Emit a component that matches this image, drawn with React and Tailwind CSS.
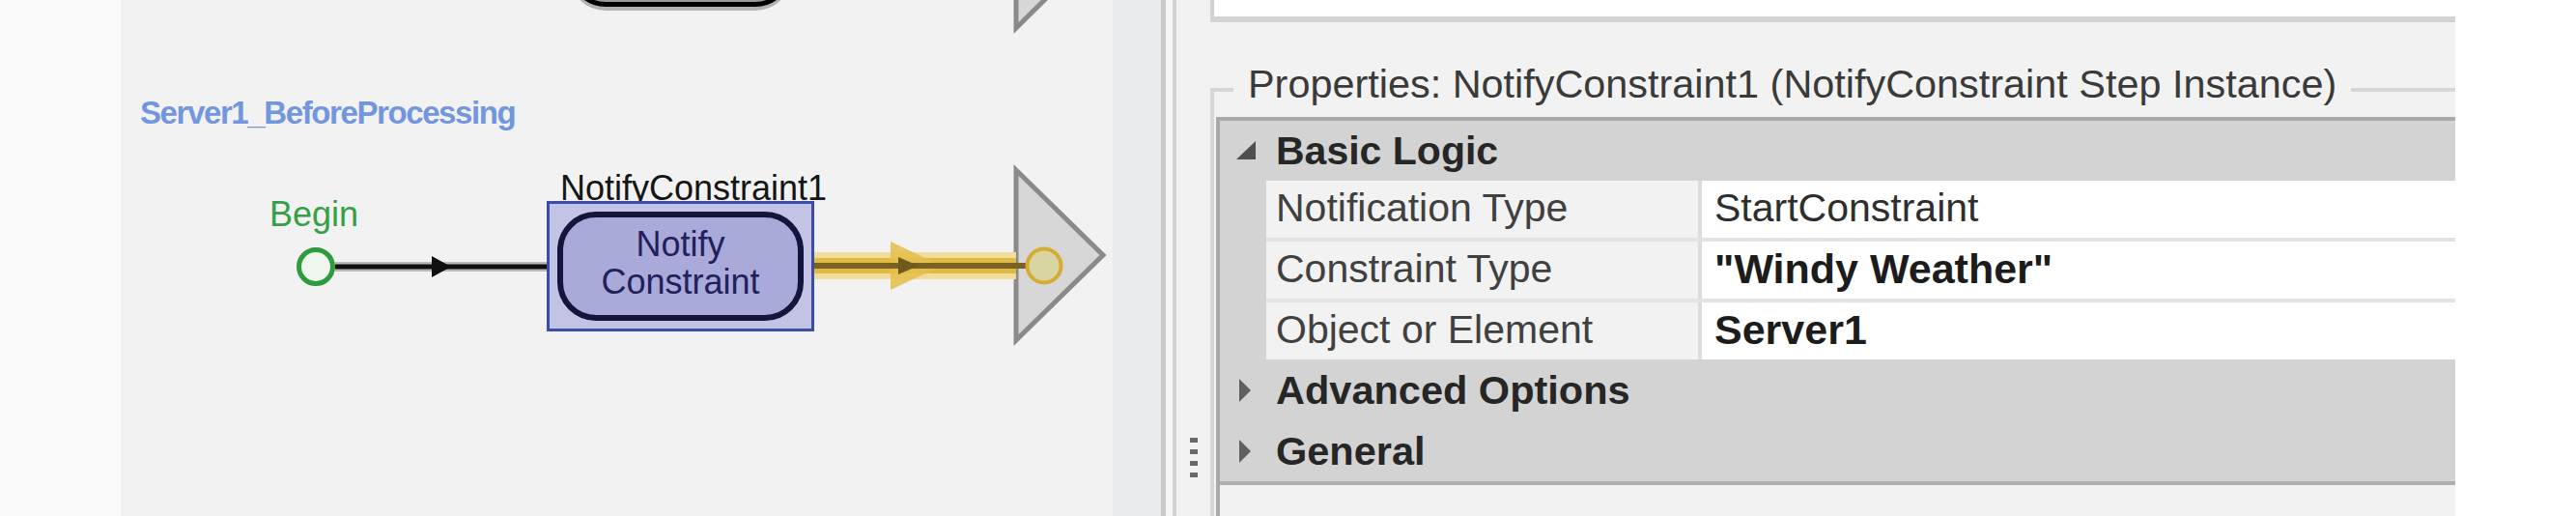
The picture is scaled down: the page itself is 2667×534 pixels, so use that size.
import React from 'react';

const ExpandedIcon = () => (
  <svg width="20" height="20" viewBox="0 0 20 20">
    <polygon points="0,19 20,0 20,19" fill="#4f4f4f" />
  </svg>
);

const CollapsedIcon = () => (
  <svg width="12" height="24" viewBox="0 0 12 24">
    <polygon points="0,0 12,12 0,24" fill="#5f5f5f" />
  </svg>
);

const Category = ({ title, open }) => (
  <div className="flex h-[63px] items-center bg-[#d3d3d3]">
    <div className={open ? 'flex w-[58px] shrink-0 items-center pl-[17px]' : 'flex w-[58px] shrink-0 items-center pl-[20px]'}>
      {open ? <ExpandedIcon /> : <CollapsedIcon />}
    </div>
    <span className="whitespace-nowrap text-[41.5px] font-bold leading-[41px] text-[#262626]">{title}</span>
  </div>
);

const PropRow = ({ name, value, bold }) => (
  <div className="flex h-[59px]">
    <div className="flex w-[447px] shrink-0 items-center bg-[#f2f2f2] pb-[3px] pl-[10px]">
      <span className="whitespace-nowrap text-[41px] leading-[41px] text-[#404040]">{name}</span>
    </div>
    <div className="w-[4px] shrink-0 bg-[#dcdcdc]" />
    <div className="flex flex-1 items-center bg-white pb-[3px] pl-[13px]">
      <span className={bold ? 'whitespace-nowrap text-[43px] font-bold leading-[41px] text-[#1c1c1c]' : 'whitespace-nowrap text-[41px] leading-[41px] text-[#2e2e2e]'}>
        {value}
      </span>
    </div>
  </div>
);

const Canvas = () => (
  <div className="relative w-[1027px] shrink-0 overflow-hidden bg-[#f2f2f2]">
    <svg className="absolute inset-0" width="1027" height="534" viewBox="0 0 1027 534">
      {/* output connectors */}
      <polygon points="927,-150 1017,-60 927,29" fill="#d7d7d7" stroke="#8a8a8a" strokeWidth="5" />
      <polygon points="927,176 1017,264 927,352" fill="#d7d7d7" stroke="#8a8a8a" strokeWidth="5" />

      {/* Begin -> step link */}
      <line x1="222" y1="276" x2="452" y2="276" stroke="#b9b9b9" strokeWidth="10" />
      <line x1="222" y1="276" x2="452" y2="276" stroke="#111111" strokeWidth="5" />
      <polygon points="322,265 342,276 322,287" fill="#111111" />

      {/* highlighted link */}
      <line x1="706" y1="275" x2="927" y2="275" stroke="#f2dc9c" strokeWidth="28" />
      <line x1="706" y1="275" x2="927" y2="275" stroke="#e0b844" strokeWidth="16" />
      <polygon points="797,250 850,275 797,300" fill="#e6c050" opacity="0.9" />
      <line x1="706" y1="275" x2="940" y2="275" stroke="#7a6220" strokeWidth="6" />
      <polygon points="805,266 826,275 805,284" fill="#6e5a1e" />
      <circle cx="956" cy="275" r="17.5" fill="#d9d5a3" stroke="#d6ac38" strokeWidth="4" />

      {/* Begin node */}
      <circle cx="202" cy="276" r="17.5" fill="#eef6ee" stroke="#2f9b3f" strokeWidth="5" />
    </svg>

    {/* step partly above the view */}
    <div className="absolute left-[464px] top-[-70px] h-[77px] w-[231px] rounded-[38px] border-[5px] border-black bg-[#9a9a9a] shadow-[0_4px_0_#b3b3b3]" />

    <div className="absolute left-[20px] top-[100px] whitespace-nowrap text-[33px] font-bold leading-[33px] tracking-[-1.4px] text-[#7397de]">
      Server1_BeforeProcessing
    </div>

    <div className="absolute left-[154px] top-[204px] text-[36px] leading-[36px] text-[#36a046]">Begin</div>

    <div className="absolute left-[455px] top-[177px] whitespace-nowrap text-[36px] leading-[36px] text-[#151515]">
      NotifyConstraint1
    </div>

    <div className="absolute left-[441px] top-[208px] h-[135px] w-[277px] border-[3px] border-[#3c4ca8] bg-[#c3c3e6] p-[8px]">
      <div className="flex h-full w-full flex-col items-center justify-center rounded-[40px] border-[6px] border-[#14143c] bg-[#a9a9da] pb-[7px] text-[36px] leading-[39px] text-[#22205a]">
        <span>Notify</span>
        <span>Constraint</span>
      </div>
    </div>
  </div>
);

const PropertiesPanel = () => (
  <div className="flex w-[1324px] shrink-0 bg-[#f2f2f2]">
    {/* splitter grip */}
    <div className="flex w-[35px] shrink-0 flex-col items-center gap-[7px] pt-[453px]">
      <div className="h-[5px] w-[8px] bg-[#6a6a6a]" />
      <div className="h-[5px] w-[8px] bg-[#6a6a6a]" />
      <div className="h-[5px] w-[8px] bg-[#6a6a6a]" />
      <div className="h-[5px] w-[8px] bg-[#6a6a6a]" />
    </div>

    <div className="flex flex-1 flex-col">
      <div className="h-[23px] shrink-0 border-b-[6px] border-l-4 border-[#d3d3d3] bg-white" />

      {/* group box header */}
      <div className="mt-[44px] flex h-[41px] shrink-0">
        <div className="h-[17px] w-[24px] shrink-0 self-end border-l-4 border-t-4 border-[#d6d6d6]" />
        <span className="whitespace-nowrap px-[15px] text-[41.4px] leading-[41px] text-[#3a3a3a]">
          Properties: NotifyConstraint1 (NotifyConstraint Step Instance)
        </span>
        <div className="h-[17px] flex-1 self-end border-t-4 border-[#d6d6d6]" />
      </div>

      <div className="flex flex-1 flex-col border-l-4 border-[#d6d6d6] pl-[2px] pt-[13px]">
        <div className="flex flex-1 flex-col border-l-4 border-t-4 border-[#a9a9a9]">
          <div className="flex h-[62px] items-center bg-[#d3d3d3]">
            <div className="flex w-[58px] shrink-0 items-center pl-[17px]">
              <ExpandedIcon />
            </div>
            <span className="whitespace-nowrap text-[41px] font-bold leading-[41px] text-[#262626]">Basic Logic</span>
          </div>
          <div className="flex flex-col bg-[#d3d3d3] pl-[48px]">
            <PropRow name="Notification Type" value="StartConstraint" />
            <div className="h-[4px] bg-[#e3e3e3]" />
            <PropRow name="Constraint Type" value={'"Windy Weather"'} bold />
            <div className="h-[4px] bg-[#e3e3e3]" />
            <PropRow name="Object or Element" value="Server1" bold />
          </div>
          <Category title="Advanced Options" />
          <Category title="General" />
          <div className="h-[4px] shrink-0 bg-[#b0b0b0]" />
          <div className="flex-1 bg-[#f2f2f2]" />
        </div>
      </div>
    </div>
  </div>
);

export default function App() {
  return (
    <div className="flex h-[534px] w-[2667px] overflow-hidden bg-white font-['Liberation_Sans',Arial,sans-serif]">
      <div className="w-[125px] shrink-0 bg-[#fafafa]" />
      <Canvas />
      <div className="w-[50px] shrink-0 bg-[#ebecee]" />
      <div className="w-[5px] shrink-0 bg-[#c9c9c9]" />
      <div className="w-[7px] shrink-0 bg-[#f5f5f5]" />
      <div className="w-[4px] shrink-0 bg-[#d2d2d2]" />
      <PropertiesPanel />
      <div className="w-[125px] shrink-0 bg-white" />
    </div>
  );
}
